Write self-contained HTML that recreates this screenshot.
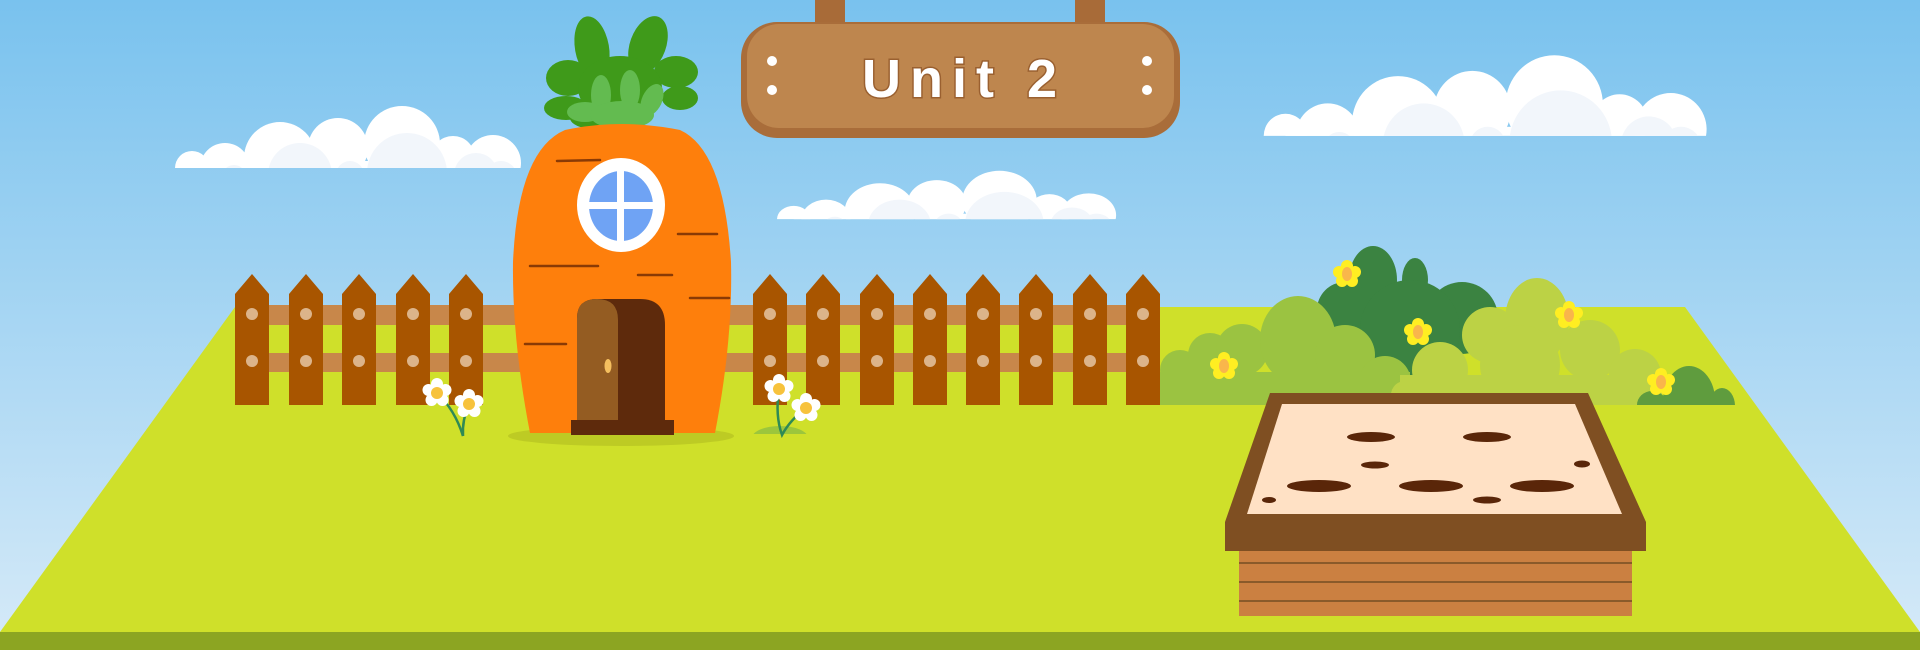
<!DOCTYPE html>
<html><head><meta charset="utf-8"><style>
html,body{margin:0;padding:0;width:1920px;height:650px;overflow:hidden}
svg{display:block}
</style></head><body>
<svg width="1920" height="650" viewBox="0 0 1920 650" xmlns="http://www.w3.org/2000/svg">
<defs>
<linearGradient id="sky" x1="0" y1="0" x2="0" y2="1">
<stop offset="0" stop-color="#79c2ee"/><stop offset="1" stop-color="#d6eaf8"/>
</linearGradient>
<clipPath id="cc" clipPathUnits="userSpaceOnUse"><rect x="-10" y="-20" width="380" height="83"/></clipPath>
<clipPath id="bc" clipPathUnits="userSpaceOnUse"><rect x="1100" y="200" width="700" height="205"/></clipPath>
<clipPath id="gc" clipPathUnits="userSpaceOnUse"><rect x="700" y="380" width="150" height="54"/></clipPath>
<g id="cloud">
<g clip-path="url(#cc)">
<g fill="#fff">
<circle cx="16" cy="63" r="17"/>
<circle cx="49" cy="63" r="25"/>
<circle cx="104" cy="53" r="36"/>
<circle cx="162" cy="43" r="30"/>
<circle cx="226" cy="39" r="38"/>
<circle cx="277" cy="53" r="22"/>
<circle cx="317" cy="58" r="28"/>
<rect x="16" y="56" width="305" height="9"/>
</g>
<g fill="#f2f6fb">
<circle cx="58" cy="72" r="12"/>
<circle cx="124" cy="70" r="32"/>
<circle cx="174" cy="70" r="14"/>
<circle cx="231" cy="68" r="40"/>
<circle cx="300" cy="70" r="22"/>
<circle cx="325" cy="72" r="16"/>
</g>
</g>
</g>
<g id="post">
<path d="M0,20 L17,0 L34,20 L34,131 L0,131 Z" fill="#a85500"/>
<circle cx="17" cy="40" r="6" fill="#dcb48a"/>
<circle cx="17" cy="87" r="6" fill="#dcb48a"/>
</g>
<g id="daisy">
<g fill="#fff">
<circle cx="0" cy="-9" r="6"/><circle cx="8.5" cy="-3" r="6"/><circle cx="5.5" cy="7" r="6"/><circle cx="-5.5" cy="7" r="6"/><circle cx="-8.5" cy="-3" r="6"/>
</g>
<circle r="6" fill="#f7c23c"/>
</g>
<g id="yflower">
<g fill="#ffee22">
<circle cx="0" cy="-8" r="6"/><circle cx="8" cy="-2" r="6"/><circle cx="5" cy="7" r="6"/><circle cx="-5" cy="7" r="6"/><circle cx="-8" cy="-2" r="6"/>
</g>
<ellipse rx="5" ry="7" fill="#f9b64b"/>
</g>
</defs>
<rect width="1920" height="650" fill="url(#sky)"/>
<!-- clouds -->
<g transform="translate(176,105)"><use href="#cloud"/></g>
<g transform="translate(778,170) scale(0.98,0.78)"><use href="#cloud"/></g>
<g transform="translate(1265,54) scale(1.28,1.3)"><use href="#cloud"/></g>
<!-- grass -->
<polygon points="235,307 1685,307 1920,632 0,632" fill="#cfe02a"/>
<rect x="0" y="632" width="1920" height="18" fill="#8ca522"/>
<!-- bushes -->
<g clip-path="url(#bc)">
<g fill="#3b8341">
<ellipse cx="1373" cy="280" rx="24" ry="34"/><ellipse cx="1415" cy="280" rx="13" ry="22"/><circle cx="1462" cy="318" r="36"/><circle cx="1345" cy="310" r="28"/><circle cx="1410" cy="330" r="50"/>
</g>
<g fill="#9bc341">
<circle cx="1180" cy="370" r="20"/><circle cx="1210" cy="355" r="22"/><circle cx="1242" cy="350" r="26"/><ellipse cx="1298" cy="340" rx="38" ry="44"/><circle cx="1345" cy="355" r="30"/><circle cx="1385" cy="382" r="26"/><rect x="1160" y="372" width="250" height="40"/>
</g>
<g fill="#bcd245">
<ellipse cx="1537" cy="320" rx="32" ry="42"/><circle cx="1490" cy="335" r="28"/><circle cx="1440" cy="370" r="28"/><circle cx="1590" cy="350" r="30"/><circle cx="1635" cy="375" r="26"/><circle cx="1520" cy="365" r="40"/><circle cx="1405" cy="395" r="14"/><rect x="1400" y="375" width="262" height="35"/>
</g>
<g fill="#5f9c3e">
<ellipse cx="1689" cy="400" rx="26" ry="34"/><ellipse cx="1722" cy="406" rx="13" ry="18"/><ellipse cx="1652" cy="405" rx="15" ry="14"/>
</g>
</g>
<use href="#yflower" x="1347" y="274"/>
<use href="#yflower" x="1418" y="332"/>
<use href="#yflower" x="1569" y="315"/>
<use href="#yflower" x="1224" y="366"/>
<use href="#yflower" x="1661" y="382"/>
<!-- fence rails -->
<rect x="235" y="305" width="925" height="20" fill="#c8874a"/>
<rect x="235" y="353" width="925" height="19" fill="#c8874a"/>
<g transform="translate(0,274)">
<use href="#post" x="235"/><use href="#post" x="289"/><use href="#post" x="342"/><use href="#post" x="396"/><use href="#post" x="449"/>
<use href="#post" x="753"/><use href="#post" x="806"/><use href="#post" x="860"/><use href="#post" x="913"/><use href="#post" x="966"/><use href="#post" x="1019"/><use href="#post" x="1073"/><use href="#post" x="1126"/>
</g>
<!-- daisies -->
<path d="M437,393 Q455,410 463,436" stroke="#2f8a55" stroke-width="2.5" fill="none"/>
<path d="M469,404 Q462,420 463,436" stroke="#2f8a55" stroke-width="2.5" fill="none"/>
<use href="#daisy" x="437" y="393"/><use href="#daisy" x="469" y="404"/>
<g clip-path="url(#gc)"><ellipse cx="780" cy="438" rx="28" ry="12" fill="#9cc63c"/></g>
<path d="M779,390 Q775,415 782,435 Q790,420 806,408" stroke="#2f8a55" stroke-width="2.5" fill="none"/>
<use href="#daisy" x="779" y="389"/><use href="#daisy" x="806" y="408"/>
<!-- carrot -->
<ellipse cx="621" cy="436" rx="113" ry="10" fill="#bdcb24"/>
<g fill="#3f9a1a">
<ellipse cx="592" cy="48" rx="17" ry="32" transform="rotate(-10 592 48)"/><ellipse cx="648" cy="45" rx="18" ry="30" transform="rotate(20 648 45)"/>
<ellipse cx="568" cy="78" rx="22" ry="18"/><ellipse cx="676" cy="72" rx="22" ry="16"/>
<ellipse cx="566" cy="108" rx="22" ry="12"/><ellipse cx="680" cy="98" rx="18" ry="12"/>
<ellipse cx="620" cy="88" rx="42" ry="32"/><ellipse cx="600" cy="118" rx="30" ry="12"/>
</g>
<g fill="#63bb50">
<ellipse cx="601" cy="95" rx="10" ry="20"/><ellipse cx="630" cy="90" rx="10" ry="20"/><ellipse cx="652" cy="100" rx="10" ry="17" transform="rotate(25 652 100)"/>
<ellipse cx="585" cy="112" rx="18" ry="10"/><ellipse cx="622" cy="115" rx="32" ry="14"/>
</g>
<path d="M565,130 Q621,118 680,130 Q724,150 731,262 Q733,340 715,433 L530,433 Q512,340 513,262 Q518,150 565,130 Z" fill="#fe7f0c"/>
<g stroke="#8a3a05" stroke-width="2.5" stroke-linecap="round">
<line x1="557" y1="161" x2="600" y2="160"/><line x1="678" y1="234" x2="717" y2="234"/><line x1="530" y1="266" x2="598" y2="266"/><line x1="638" y1="275" x2="672" y2="275"/><line x1="690" y1="298" x2="729" y2="298"/><line x1="525" y1="344" x2="566" y2="344"/>
</g>
<ellipse cx="621" cy="205" rx="44" ry="47" fill="#fff"/>
<ellipse cx="621" cy="206" rx="32" ry="35" fill="#6fa3f4"/>
<rect x="617" y="170" width="7" height="72" fill="#fff"/>
<rect x="586" y="202" width="72" height="7" fill="#fff"/>
<path d="M577,421 L577,318 Q577,299 597,299 L640,299 Q665,299 665,325 L665,421 Z" fill="#5e2a0c"/>
<path d="M577,421 L577,318 Q577,299 597,299 Q618,299 618,320 L618,421 Z" fill="#945c22"/>
<ellipse cx="608" cy="366" rx="3.5" ry="7" fill="#f5bf5f"/>
<rect x="571" y="420" width="103" height="15" fill="#5e2a0c"/>
<!-- sign -->
<rect x="815" y="0" width="30" height="26" fill="#a86b38"/>
<rect x="1075" y="0" width="30" height="26" fill="#a86b38"/>
<rect x="741" y="22" width="439" height="116" rx="36" fill="#a96d3a"/>
<rect x="747" y="24" width="427" height="104" rx="32" fill="#be864e"/>
<g fill="#fff"><circle cx="772" cy="61" r="5"/><circle cx="772" cy="90" r="5"/><circle cx="1147" cy="61" r="5"/><circle cx="1147" cy="90" r="5"/></g>
<text x="964" y="97" text-anchor="middle" font-family="'Liberation Sans',sans-serif" font-weight="bold" font-size="54" letter-spacing="9" fill="#fff" style="paint-order:stroke" stroke="#9a6030" stroke-width="3">Unit 2</text>
<!-- sandbox -->
<rect x="1239" y="549" width="393" height="67" fill="#cb8041"/>
<g stroke="#8a5a2a" stroke-width="2"><line x1="1239" y1="563" x2="1632" y2="563"/><line x1="1239" y1="582" x2="1632" y2="582"/><line x1="1239" y1="601" x2="1632" y2="601"/></g>
<path d="M1270,393 L1588,393 L1646,522 L1646,551 L1225,551 L1225,522 Z" fill="#7f4f22"/>
<polygon points="1282,404 1575,404 1622,514 1247,514" fill="#ffe1c5"/>
<g fill="#5a2609">
<ellipse cx="1371" cy="437" rx="24" ry="5"/><ellipse cx="1487" cy="437" rx="24" ry="5"/>
<ellipse cx="1375" cy="465" rx="14" ry="3.5"/><ellipse cx="1582" cy="464" rx="8" ry="3.5"/>
<ellipse cx="1319" cy="486" rx="32" ry="6"/><ellipse cx="1431" cy="486" rx="32" ry="6"/><ellipse cx="1542" cy="486" rx="32" ry="6"/>
<ellipse cx="1269" cy="500" rx="7" ry="3"/><ellipse cx="1487" cy="500" rx="14" ry="3.5"/>
</g>
</svg>
</body></html>
